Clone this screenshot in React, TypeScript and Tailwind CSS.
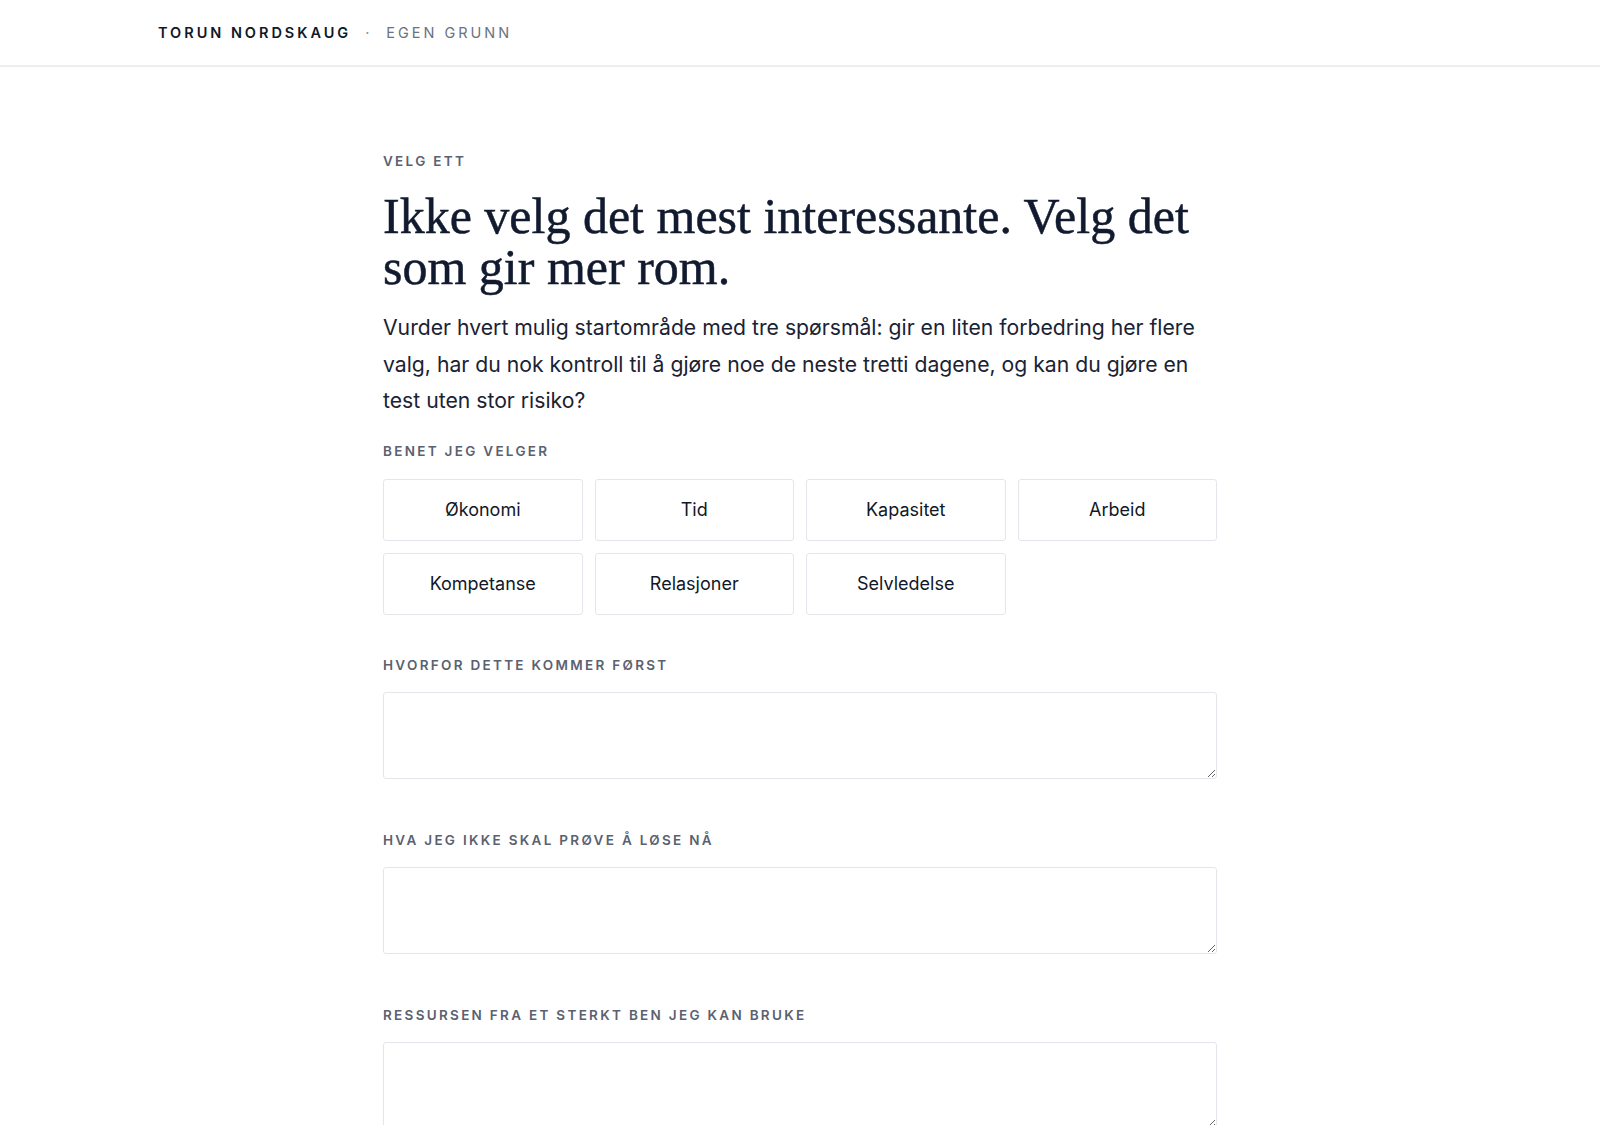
import { useState } from 'react';

const BENEFITS = ['Økonomi', 'Tid', 'Kapasitet', 'Arbeid', 'Kompetanse', 'Relasjoner', 'Selvledelse'];

const FIELDS = [
  { id: 'hvorfor', label: 'Hvorfor dette kommer først' },
  { id: 'ikke', label: 'Hva jeg ikke skal prøve å løse nå' },
  { id: 'ressurs', label: 'Ressursen fra et sterkt ben jeg kan bruke' },
];

const labelClass =
  'block text-[13.5px] leading-[20px] font-semibold uppercase tracking-[0.17em] text-[#5a6170]';

const App = () => {
  const [selected, setSelected] = useState<string | null>(null);
  const [values, setValues] = useState<Record<string, string>>({});

  return (
    <div className="min-h-screen bg-white font-['Inter',sans-serif] text-[#111827]">
      <header className="h-[67px] border-b-2 border-[#eceef2]">
        <div className="max-w-[1284px] mx-auto h-full flex items-center text-[14.5px] uppercase tracking-[0.205em]">
          <span className="font-semibold text-[#111827]">Torun Nordskaug</span>
          <span className="mx-[14px] text-[#8b919c]">·</span>
          <span className="text-[#6b7280]">Egen grunn</span>
        </div>
      </header>

      <main className="max-w-[834px] mx-auto pt-[84px] pb-24">
        <p className={labelClass}>Velg ett</p>
        <h1 className="mt-[20px] font-['Liberation_Serif',serif] text-[50px] leading-[51px] text-[#111a2e] [-webkit-text-stroke:0.5px_#111a2e]">
          Ikke velg det mest interessante. Velg det som gir mer rom.
        </h1>
        <p className="mt-[16px] text-[21.2px] leading-[36.5px] text-[#1a2233]">
          Vurder hvert mulig startområde med tre spørsmål: gir en liten forbedring her flere valg, har du
          nok kontroll til å gjøre noe de neste tretti dagene, og kan du gjøre en test uten stor risiko?
        </p>

        <section className="mt-[22px]">
          <p className={labelClass}>Benet jeg velger</p>
          <div className="mt-[18px] grid grid-cols-4 gap-3">
            {BENEFITS.map((b) => (
              <button
                key={b}
                type="button"
                onClick={() => setSelected(b)}
                className={
                  selected === b
                    ? 'h-[62px] rounded-[3px] border border-[#111827] bg-[#111827] text-[18px] text-white'
                    : 'h-[62px] rounded-[3px] border border-[#e3e6eb] bg-white text-[18px] text-[#111827] hover:border-[#c9cdd4]'
                }
              >
                {b}
              </button>
            ))}
          </div>
        </section>

        {FIELDS.map((f, i) => (
          <section key={f.id} className={i === 0 ? 'mt-[40px]' : 'mt-[51px]'}>
            <label htmlFor={f.id} className={labelClass}>
              {f.label}
            </label>
            <textarea
              id={f.id}
              value={values[f.id] ?? ''}
              onChange={(e) => setValues({ ...values, [f.id]: e.target.value })}
              className="mt-[17px] block w-full h-[87px] rounded-[3px] border border-[#e3e6eb] bg-white px-4 py-3 text-[18px] outline-none focus:border-[#9ca3af]"
            />
          </section>
        ))}
      </main>
    </div>
  );
};

export default App;
